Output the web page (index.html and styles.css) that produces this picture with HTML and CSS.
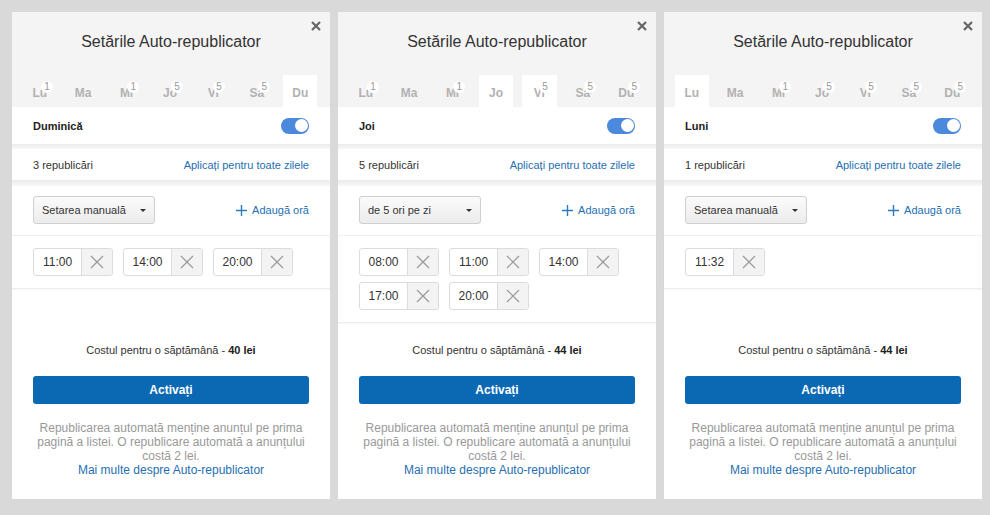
FILE: index.html
```html
<!DOCTYPE html>
<html lang="ro">
<head>
<meta charset="UTF-8">
<meta name="viewport" content="width=device-width, initial-scale=1.0">
<title>Setările Auto-republicator</title>
<link rel="stylesheet" href="styles.css">
</head>
<body>
  <div class="panels">

    <!-- Duminica -->
    <div class="panel">
      <div class="panel-head">
        <h2 class="title">Setările Auto-republicator</h2>
        <span class="close"><svg width="10" height="10" viewBox="0 0 10 10"><path d="M1 1L9 9M9 1L1 9" stroke="#666" stroke-width="2.2"/></svg></span>
        <div class="tabs">
          <div class="tab"><span class="tab-label">Lu<span class="badge">1</span></span></div>
          <div class="tab"><span class="tab-label">Ma</span></div>
          <div class="tab"><span class="tab-label">Mi<span class="badge">1</span></span></div>
          <div class="tab"><span class="tab-label">Jo<span class="badge">5</span></span></div>
          <div class="tab"><span class="tab-label">Vi<span class="badge">5</span></span></div>
          <div class="tab"><span class="tab-label">Sa<span class="badge">5</span></span></div>
          <div class="tab active"><span class="tab-label">Du</span></div>
        </div>
      </div>
      <div class="row day-row">
        <span class="day-name">Duminică</span>
        <span class="toggle"></span>
      </div>
      <div class="sep"></div>
      <div class="row count-row">
        <span>3 republicări</span>
        <a class="link" href="#">Aplicați pentru toate zilele</a>
      </div>
      <div class="sep sep-wide"></div>
      <div class="mode-row">
        <div class="select">Setarea manuală<span class="caret"></span></div>
        <a class="link add-time" href="#"><svg width="11" height="11" viewBox="0 0 11 11"><path d="M5.5 0V11M0 5.5H11" stroke="#2b7bbd" stroke-width="1.4"/></svg>Adaugă oră</a>
      </div>
      <div class="chips">
        <div class="chip"><span class="chip-time">11:00</span><span class="chip-x"><svg width="14" height="14" viewBox="0 0 14 14"><path d="M1 1L13 13M13 1L1 13" stroke="#999" stroke-width="1.2"/></svg></span></div>
        <div class="chip"><span class="chip-time">14:00</span><span class="chip-x"><svg width="14" height="14" viewBox="0 0 14 14"><path d="M1 1L13 13M13 1L1 13" stroke="#999" stroke-width="1.2"/></svg></span></div>
        <div class="chip"><span class="chip-time">20:00</span><span class="chip-x"><svg width="14" height="14" viewBox="0 0 14 14"><path d="M1 1L13 13M13 1L1 13" stroke="#999" stroke-width="1.2"/></svg></span></div>
      </div>
      <div class="panel-foot">
        <p class="cost">Costul pentru o săptămână - <b>40 lei</b></p>
        <button class="activate">Activați</button>
        <p class="note">Republicarea automată menține anunțul pe prima pagină a listei. O republicare automată a anunțului costă 2 lei.<br><a class="link" href="#">Mai multe despre Auto-republicator</a></p>
      </div>
    </div>

    <!-- Joi -->
    <div class="panel">
      <div class="panel-head">
        <h2 class="title">Setările Auto-republicator</h2>
        <span class="close"><svg width="10" height="10" viewBox="0 0 10 10"><path d="M1 1L9 9M9 1L1 9" stroke="#666" stroke-width="2.2"/></svg></span>
        <div class="tabs">
          <div class="tab"><span class="tab-label">Lu<span class="badge">1</span></span></div>
          <div class="tab"><span class="tab-label">Ma</span></div>
          <div class="tab"><span class="tab-label">Mi<span class="badge">1</span></span></div>
          <div class="tab active"><span class="tab-label">Jo</span></div>
          <div class="tab active"><span class="tab-label">Vi<span class="badge">5</span></span></div>
          <div class="tab"><span class="tab-label">Sa<span class="badge">5</span></span></div>
          <div class="tab"><span class="tab-label">Du<span class="badge">5</span></span></div>
        </div>
      </div>
      <div class="row day-row">
        <span class="day-name">Joi</span>
        <span class="toggle"></span>
      </div>
      <div class="sep"></div>
      <div class="row count-row">
        <span>5 republicări</span>
        <a class="link" href="#">Aplicați pentru toate zilele</a>
      </div>
      <div class="sep sep-wide"></div>
      <div class="mode-row">
        <div class="select">de 5 ori pe zi<span class="caret"></span></div>
        <a class="link add-time" href="#"><svg width="11" height="11" viewBox="0 0 11 11"><path d="M5.5 0V11M0 5.5H11" stroke="#2b7bbd" stroke-width="1.4"/></svg>Adaugă oră</a>
      </div>
      <div class="chips">
        <div class="chip"><span class="chip-time">08:00</span><span class="chip-x"><svg width="14" height="14" viewBox="0 0 14 14"><path d="M1 1L13 13M13 1L1 13" stroke="#999" stroke-width="1.2"/></svg></span></div>
        <div class="chip"><span class="chip-time">11:00</span><span class="chip-x"><svg width="14" height="14" viewBox="0 0 14 14"><path d="M1 1L13 13M13 1L1 13" stroke="#999" stroke-width="1.2"/></svg></span></div>
        <div class="chip"><span class="chip-time">14:00</span><span class="chip-x"><svg width="14" height="14" viewBox="0 0 14 14"><path d="M1 1L13 13M13 1L1 13" stroke="#999" stroke-width="1.2"/></svg></span></div>
        <div class="chip"><span class="chip-time">17:00</span><span class="chip-x"><svg width="14" height="14" viewBox="0 0 14 14"><path d="M1 1L13 13M13 1L1 13" stroke="#999" stroke-width="1.2"/></svg></span></div>
        <div class="chip"><span class="chip-time">20:00</span><span class="chip-x"><svg width="14" height="14" viewBox="0 0 14 14"><path d="M1 1L13 13M13 1L1 13" stroke="#999" stroke-width="1.2"/></svg></span></div>
      </div>
      <div class="panel-foot">
        <p class="cost">Costul pentru o săptămână - <b>44 lei</b></p>
        <button class="activate">Activați</button>
        <p class="note">Republicarea automată menține anunțul pe prima pagină a listei. O republicare automată a anunțului costă 2 lei.<br><a class="link" href="#">Mai multe despre Auto-republicator</a></p>
      </div>
    </div>

    <!-- Luni -->
    <div class="panel">
      <div class="panel-head">
        <h2 class="title">Setările Auto-republicator</h2>
        <span class="close"><svg width="10" height="10" viewBox="0 0 10 10"><path d="M1 1L9 9M9 1L1 9" stroke="#666" stroke-width="2.2"/></svg></span>
        <div class="tabs">
          <div class="tab active"><span class="tab-label">Lu</span></div>
          <div class="tab"><span class="tab-label">Ma</span></div>
          <div class="tab"><span class="tab-label">Mi<span class="badge">1</span></span></div>
          <div class="tab"><span class="tab-label">Jo<span class="badge">5</span></span></div>
          <div class="tab"><span class="tab-label">Vi<span class="badge">5</span></span></div>
          <div class="tab"><span class="tab-label">Sa<span class="badge">5</span></span></div>
          <div class="tab"><span class="tab-label">Du<span class="badge">5</span></span></div>
        </div>
      </div>
      <div class="row day-row">
        <span class="day-name">Luni</span>
        <span class="toggle"></span>
      </div>
      <div class="sep"></div>
      <div class="row count-row">
        <span>1 republicări</span>
        <a class="link" href="#">Aplicați pentru toate zilele</a>
      </div>
      <div class="sep sep-wide"></div>
      <div class="mode-row">
        <div class="select">Setarea manuală<span class="caret"></span></div>
        <a class="link add-time" href="#"><svg width="11" height="11" viewBox="0 0 11 11"><path d="M5.5 0V11M0 5.5H11" stroke="#2b7bbd" stroke-width="1.4"/></svg>Adaugă oră</a>
      </div>
      <div class="chips">
        <div class="chip"><span class="chip-time">11:32</span><span class="chip-x"><svg width="14" height="14" viewBox="0 0 14 14"><path d="M1 1L13 13M13 1L1 13" stroke="#999" stroke-width="1.2"/></svg></span></div>
      </div>
      <div class="panel-foot">
        <p class="cost">Costul pentru o săptămână - <b>44 lei</b></p>
        <button class="activate">Activați</button>
        <p class="note">Republicarea automată menține anunțul pe prima pagină a listei. O republicare automată a anunțului costă 2 lei.<br><a class="link" href="#">Mai multe despre Auto-republicator</a></p>
      </div>
    </div>

  </div>
</body>
</html>
```

FILE: styles.css
```css
body {
  margin: 0;
  background-color: #d9d9d9;
  font-family: "Liberation Sans", Arial, sans-serif;
  color: #333;
}
.panels {
  display: flex;
  gap: 8px;
  padding: 12px 0 0 12px;
}
.panel {
  position: relative;
  width: 318px;
  height: 487px;
  background-color: #fff;
  display: flex;
  flex-direction: column;
}
.panel-head {
  background-color: #f4f4f4;
}
.title {
  margin: 0;
  height: 63px;
  line-height: 60px;
  font-size: 16px;
  font-weight: normal;
  color: #333;
  text-align: center;
}
.close {
  position: absolute;
  top: 9px;
  right: 9px;
  width: 10px;
  height: 10px;
  line-height: 0;
}
.tabs {
  display: flex;
  height: 32px;
  padding: 0 8px 0 6px;
}
.tab {
  flex: 1;
  margin: 0 4.5px;
  text-align: center;
  padding-top: 8px;
  box-sizing: border-box;
}
.tab.active {
  background-color: #fff;
}
.tab-label {
  position: relative;
  display: inline-block;
  font-size: 12px;
  line-height: 14px;
  font-weight: bold;
  color: #b2b2b2;
}
.badge {
  position: absolute;
  top: -5px;
  right: -6px;
  width: 12px;
  height: 12px;
  border-radius: 50%;
  background-color: #fff;
  font-size: 10px;
  line-height: 11px;
  font-weight: normal;
  color: #999;
  text-align: center;
}
.row {
  display: flex;
  justify-content: space-between;
  align-items: center;
  padding: 0 21px;
  font-size: 11px;
}
.day-row {
  height: 37px;
}
.day-name {
  font-weight: bold;
  color: #222;
}
.toggle {
  position: relative;
  width: 28px;
  height: 16px;
  border-radius: 8px;
  background-color: #4a89dc;
}
.toggle::after {
  content: "";
  position: absolute;
  top: 1.5px;
  right: 1.5px;
  width: 13px;
  height: 13px;
  border-radius: 50%;
  background-color: #fff;
}
.sep {
  height: 5px;
  background: linear-gradient(#ececec, #f7f7f7);
}
.sep-wide {
  height: 6px;
}
.count-row {
  height: 31px;
}
.link {
  color: #1f6fb2;
  text-decoration: none;
}
.mode-row {
  display: flex;
  justify-content: space-between;
  align-items: center;
  padding: 10px 21px 11px;
  border-bottom: 1px solid #efefef;
}
.select {
  position: relative;
  width: 122px;
  height: 28px;
  box-sizing: border-box;
  padding-left: 8px;
  line-height: 26px;
  font-size: 11px;
  color: #333;
  border: 1px solid #cfcfcf;
  border-radius: 3px;
  background: linear-gradient(#fbfbfb, #ececec);
}
.caret {
  position: absolute;
  right: 8px;
  top: 12px;
  border-top: 3px solid #333;
  border-left: 3px solid transparent;
  border-right: 3px solid transparent;
}
.add-time {
  display: flex;
  align-items: center;
  gap: 5px;
  font-size: 11px;
}
.chips {
  display: flex;
  flex-wrap: wrap;
  gap: 6px 10px;
  padding: 12px 21px 12px;
  border-bottom: 1px solid #ececec;
  box-shadow: 0 1px 2px rgba(0, 0, 0, 0.04);
}
.chip {
  display: flex;
  width: 80px;
  height: 28px;
  box-sizing: border-box;
  border: 1px solid #dcdcdc;
  border-radius: 3px;
  overflow: hidden;
}
.chip-time {
  width: 47px;
  text-align: center;
  line-height: 26px;
  font-size: 12px;
  color: #333;
}
.chip-x {
  flex: 1;
  display: flex;
  align-items: center;
  justify-content: center;
  background-color: #f3f3f3;
  border-left: 1px solid #dcdcdc;
}
.panel-foot {
  margin-top: auto;
  padding: 0 21px 22px;
  text-align: center;
}
.cost {
  margin: 0 0 19px;
  font-size: 11px;
  line-height: 14px;
  color: #333;
}
.cost b {
  color: #222;
}
.activate {
  display: block;
  width: 100%;
  height: 28px;
  border: none;
  border-radius: 3px;
  background-color: #0b69b4;
  color: #fff;
  font-family: "Liberation Sans", Arial, sans-serif;
  font-size: 12px;
  font-weight: bold;
  margin-bottom: 17px;
}
.note {
  margin: 0;
  font-size: 12px;
  line-height: 14px;
  color: #999;
}
```
